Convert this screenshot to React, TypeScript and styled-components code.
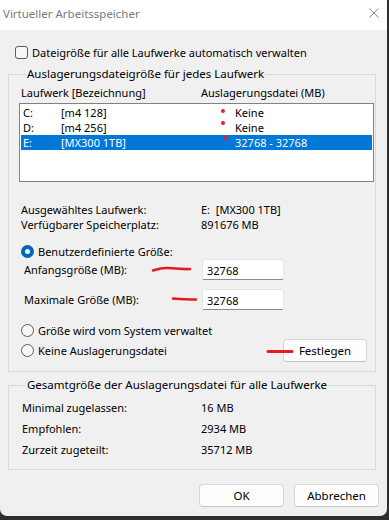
import React from "react";
import styled, { createGlobalStyle } from "styled-components";

const Global = createGlobalStyle`
  html, body { margin: 0; padding: 0; background: #2e2e2e; }
  body { font-family: "Segoe UI", "Noto Sans", "Open Sans", sans-serif; font-size: 11px; color: #000; }
  * { box-sizing: border-box; }
`;

const Window = styled.div`
  width: 387px;
  height: 516px;
  background: #f0f0f0;
  display: flex;
  flex-direction: column;
  border-bottom-right-radius: 7px;
  border-bottom-left-radius: 7px;
  overflow: hidden;
`;

const TitleBar = styled.div`
  height: 30px;
  background: #fff;
  display: flex;
  align-items: center;
  justify-content: space-between;
  padding: 0 8px 4px 3px;
  color: #7a7a7a;
  font-size: 11.5px;
`;

const Content = styled.div`
  position: relative;
  padding: 14px 11px 0 8px;
  display: flex;
  flex-direction: column;
`;

const CheckRow = styled.label`
  height: 16px;
  display: flex;
  align-items: center;
  gap: 4px;
  padding-left: 7px;
`;

const CheckBox = styled.span`
  width: 13px;
  height: 13px;
  border: 1px solid #5c5c5c;
  border-radius: 3px;
  background: #f7f7f7;
`;

const Group = styled.fieldset<{ $top: number; $pb: number }>`
  margin: ${(p) => p.$top}px 0 0 0;
  padding: 0 2px ${(p) => p.$pb}px 10px;
  border: 1px solid #dadada;
  min-width: 0;
  position: relative;
`;

const Legend = styled.legend`
  margin-left: 7px;
  padding: 0 1px;
  line-height: 16px;
  font-size: 11.5px;
`;

const TwoCol = styled.div<{ $h: number; $indent: number }>`
  display: grid;
  grid-template-columns: ${(p) => 182 - p.$indent}px 1fr;
  height: ${(p) => p.$h}px;
  align-items: center;
  padding-left: ${(p) => p.$indent}px;
`;

const Header = styled.div`
  margin-top: 2px;
`;

const ListBox = styled.div`
  margin-top: 3px;
  height: 79px;
  width: 355px;
  background: #fff;
  border: 1px solid #828282;
  padding: 1px 1px 0 1px;
  display: flex;
  flex-direction: column;
`;

const ListRow = styled.div<{ $sel?: boolean }>`
  position: relative;
  display: grid;
  grid-template-columns: 38px 174px 1fr;
  height: 15px;
  align-items: center;
  padding-left: 2px;
  background: ${(p) => (p.$sel ? "#0078d7" : "transparent")};
  color: ${(p) => (p.$sel ? "#fff" : "#000")};
`;

const Dot = styled.span<{ $x: number; $y: number }>`
  position: absolute;
  left: ${(p) => p.$x}px;
  top: ${(p) => p.$y}px;
  width: 4px;
  height: 4px;
  border-radius: 50%;
  background: #ec1c24;
  z-index: 1;
`;

const Info = styled.div<{ $top: number }>`
  margin-top: ${(p) => p.$top}px;
`;

const RadioRow = styled.label<{ $top: number }>`
  margin-top: ${(p) => p.$top}px;
  height: 16px;
  display: flex;
  align-items: center;
  gap: 4px;
  padding-left: 2px;
`;

const Radio = styled.span<{ $on?: boolean }>`
  width: 13px;
  height: 13px;
  border-radius: 50%;
  border: ${(p) => (p.$on ? "none" : "1px solid #5c5c5c")};
  background: ${(p) => (p.$on ? "#0067c0" : "#f7f7f7")};
  display: flex;
  align-items: center;
  justify-content: center;
  &::after {
    content: "";
    display: ${(p) => (p.$on ? "block" : "none")};
    width: 5px;
    height: 5px;
    border-radius: 50%;
    background: #fff;
  }
`;

const FieldRow = styled.div<{ $top: number }>`
  position: relative;
  margin-top: ${(p) => p.$top}px;
  display: grid;
  grid-template-columns: 178px 82px;
  align-items: center;
  padding-left: 5px;
  height: 21px;
`;

const TextInput = styled.div`
  height: 21px;
  background: #fff;
  border: 1px solid #e6e6e6;
  border-bottom-color: #8a8a8a;
  border-radius: 3px 3px 2px 2px;
  padding-left: 4px;
  display: flex;
  align-items: center;
  padding-top: 1px;
`;

const ActionRow = styled.div`
  position: relative;
  margin-top: 1px;
  height: 23px;
  display: flex;
  align-items: center;
  justify-content: space-between;
  padding-right: 6px;
`;

const Button = styled.button<{ $w: number }>`
  width: ${(p) => p.$w}px;
  height: 23px;
  font-family: inherit;
  font-size: 11.5px;
  color: #000;
  background: #fdfdfd;
  border: 1px solid #d6d6d6;
  border-bottom-color: #c4c4c4;
  border-radius: 4px;
  padding: 0;
`;

const Mark = styled.svg<{ $x: number; $y: number }>`
  position: absolute;
  left: ${(p) => p.$x}px;
  top: ${(p) => p.$y}px;
  overflow: visible;
`;

const Footer = styled.div`
  margin-top: 14px;
  display: flex;
  justify-content: flex-end;
  gap: 10px;
  margin-right: -3px;
`;

const drives = [
  { l: "C:", n: "[m4 128]", v: "Keine", dx: 200, dy: 4 },
  { l: "D:", n: "[m4 256]", v: "Keine", dx: 200, dy: 1 },
  { l: "E:", n: "[MX300 1TB]", v: "32768 - 32768", sel: true, dx: 203, dy: 1 },
];

export default function App() {
  return (
    <>
      <Global />
      <Window>
        <TitleBar>
          <span>Virtueller Arbeitsspeicher</span>
          <svg width="10" height="10" viewBox="0 0 10 10">
            <path d="M0.5 0.5 L9.5 9.5 M9.5 0.5 L0.5 9.5" stroke="#8a8a8a" strokeWidth="1" />
          </svg>
        </TitleBar>
        <Content>
          <CheckRow>
            <CheckBox />
            <span>Dateigröße für alle Laufwerke automatisch verwalten</span>
          </CheckRow>

          <Group $top={6} $pb={9}>
            <Legend>Auslagerungsdateigröße für jedes Laufwerk</Legend>
            <Header>
              <TwoCol $h={16} $indent={2}>
                <span>Laufwerk [Bezeichnung]</span>
                <span>Auslagerungsdatei (MB)</span>
              </TwoCol>
            </Header>
            <ListBox>
              {drives.map((d) => (
                <ListRow key={d.l} $sel={d.sel}>
                  <span>{d.l}</span>
                  <span>{d.n}</span>
                  <span>{d.v}</span>
                  <Dot $x={d.dx} $y={d.dy} />
                </ListRow>
              ))}
            </ListBox>
            <Info $top={20}>
              <TwoCol $h={15} $indent={2}>
                <span>Ausgewähltes Laufwerk:</span>
                <span>E:&nbsp;&nbsp;[MX300 1TB]</span>
              </TwoCol>
              <TwoCol $h={15} $indent={2}>
                <span>Verfügbarer Speicherplatz:</span>
                <span>891676 MB</span>
              </TwoCol>
            </Info>
            <RadioRow $top={11}>
              <Radio $on />
              <span>Benutzerdefinierte Größe:</span>
            </RadioRow>
            <FieldRow $top={0}>
              <span>Anfangsgröße (MB):</span>
              <TextInput>32768</TextInput>
              <Mark $x={133} $y={7} width="40" height="6">
                <path d="M1 4.5 C6 3 10 1.5 16 2 C22 2.5 30 3.5 38 3" stroke="#e31b23" strokeWidth="2.6" fill="none" strokeLinecap="round" />
              </Mark>
            </FieldRow>
            <FieldRow $top={9}>
              <span>Maximale Größe (MB):</span>
              <TextInput>32768</TextInput>
              <Mark $x={153} $y={8} width="26" height="4">
                <path d="M1 1.5 C8 2 16 2.5 24 2.5" stroke="#e31b23" strokeWidth="2.6" fill="none" strokeLinecap="round" />
              </Mark>
            </FieldRow>
            <RadioRow $top={12}>
              <Radio />
              <span>Größe wird vom System verwaltet</span>
            </RadioRow>
            <ActionRow>
              <RadioRow $top={0}>
                <Radio />
                <span>Keine Auslagerungsdatei</span>
              </RadioRow>
              <Button $w={84}>Festlegen</Button>
              <Mark $x={248} $y={11} width="26" height="3">
                <path d="M1 1.5 L25 1.5" stroke="#e31b23" strokeWidth="3" fill="none" strokeLinecap="round" />
              </Mark>
            </ActionRow>
          </Group>

          <Group $top={5} $pb={9}>
            <Legend>Gesamtgröße der Auslagerungsdatei für alle Laufwerke</Legend>
            <Info $top={4}>
              <TwoCol $h={21} $indent={3}>
                <span>Minimal zugelassen:</span>
                <span>16 MB</span>
              </TwoCol>
              <TwoCol $h={21} $indent={3}>
                <span>Empfohlen:</span>
                <span>2934 MB</span>
              </TwoCol>
              <TwoCol $h={21} $indent={3}>
                <span>Zurzeit zugeteilt:</span>
                <span>35712 MB</span>
              </TwoCol>
            </Info>
          </Group>

          <Footer>
            <Button $w={85}>OK</Button>
            <Button $w={85}>Abbrechen</Button>
          </Footer>
        </Content>
      </Window>
    </>
  );
}
